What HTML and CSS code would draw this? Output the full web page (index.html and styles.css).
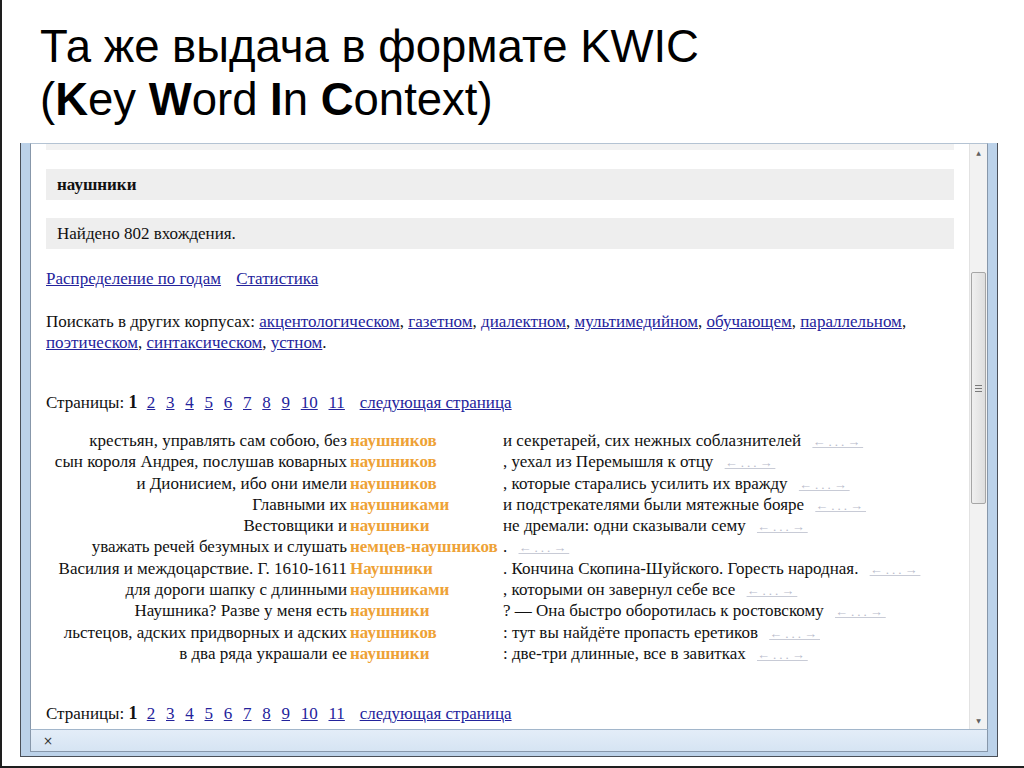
FILE: index.html
```html
<!DOCTYPE html>
<html lang="ru">
<head>
<meta charset="utf-8">
<title>KWIC</title>
<link rel="stylesheet" href="styles.css">
</head>
<body>
<div class="slide">
  <h1 class="title">Та же выдача в формате KWIC<br>(<b>K</b>ey <b>W</b>ord <b>I</b>n <b>C</b>ontext)</h1>
  <div class="window">
    <div class="client">
      <div class="page">
        <div class="topstrip"></div>
        <div class="box query">наушники</div>
        <div class="box found">Найдено 802 вхождения.</div>
        <p class="links"><a href="#">Распределение по годам</a> <a href="#">Статистика</a></p>
        <p class="other">Поискать в других корпусах: <a href="#">акцентологическом</a>, <a href="#">газетном</a>, <a href="#">диалектном</a>, <a href="#">мультимедийном</a>, <a href="#">обучающем</a>, <a href="#">параллельном</a>, <a href="#">поэтическом</a>, <a href="#">синтаксическом</a>, <a href="#">устном</a>.</p>
        <p class="pages pages-top">Страницы: <b>1</b> <a href="#">2</a> <a href="#">3</a> <a href="#">4</a> <a href="#">5</a> <a href="#">6</a> <a href="#">7</a> <a href="#">8</a> <a href="#">9</a> <a href="#">10</a> <a href="#">11</a> <a class="next" href="#">следующая страница</a></p>
        <div class="kwic">
          <div class="left">крестьян, управлять сам собою, без</div><div class="kw">наушников</div><div class="right">и секретарей, сих нежных соблазнителей <a class="ctx" href="#">←...→</a></div>
          <div class="left">сын короля Андрея, послушав коварных</div><div class="kw">наушников</div><div class="right">, уехал из Перемышля к отцу <a class="ctx" href="#">←...→</a></div>
          <div class="left">и Дионисием, ибо они имели</div><div class="kw">наушников</div><div class="right">, которые старались усилить их вражду <a class="ctx" href="#">←...→</a></div>
          <div class="left">Главными их</div><div class="kw">наушниками</div><div class="right">и подстрекателями были мятежные бояре <a class="ctx" href="#">←...→</a></div>
          <div class="left">Вестовщики и</div><div class="kw">наушники</div><div class="right">не дремали: одни сказывали сему <a class="ctx" href="#">←...→</a></div>
          <div class="left">уважать речей безумных и слушать</div><div class="kw">немцев-наушников</div><div class="right">. <a class="ctx" href="#">←...→</a></div>
          <div class="left">Василия и междоцарствие. Г. 1610-1611</div><div class="kw">Наушники</div><div class="right">. Кончина Скопина-Шуйского. Горесть народная. <a class="ctx" href="#">←...→</a></div>
          <div class="left">для дороги шапку с длинными</div><div class="kw">наушниками</div><div class="right">, которыми он завернул себе все <a class="ctx" href="#">←...→</a></div>
          <div class="left">Наушника? Разве у меня есть</div><div class="kw">наушники</div><div class="right">? — Она быстро оборотилась к ростовскому <a class="ctx" href="#">←...→</a></div>
          <div class="left">льстецов, адских придворных и адских</div><div class="kw">наушников</div><div class="right">: тут вы найдёте пропасть еретиков <a class="ctx" href="#">←...→</a></div>
          <div class="left">в два ряда украшали ее</div><div class="kw">наушники</div><div class="right">: две-три длинные, все в завитках <a class="ctx" href="#">←...→</a></div>
        </div>
        <p class="pages pages-bottom">Страницы: <b>1</b> <a href="#">2</a> <a href="#">3</a> <a href="#">4</a> <a href="#">5</a> <a href="#">6</a> <a href="#">7</a> <a href="#">8</a> <a href="#">9</a> <a href="#">10</a> <a href="#">11</a> <a class="next" href="#">следующая страница</a></p>
      </div>
      <div class="scrollbar">
        <div class="sb-arrow sb-up">▲</div>
        <div class="sb-track">
          <div class="sb-before"></div>
          <div class="sb-thumb"><span class="grip"></span></div>
        </div>
        <div class="sb-arrow sb-down">▼</div>
      </div>
    </div>
    <div class="status"><span class="close">×</span></div>
  </div>
</div>
</body>
</html>
```
FILE: styles.css
```css
html, body {
  margin: 0;
  padding: 0;
  background: #ffffff;
}
.slide {
  width: 1024px;
  height: 768px;
  box-sizing: border-box;
  border-left: 2px solid #1e1e1e;
  border-bottom: 2px solid #1e1e1e;
  background: #ffffff;
  overflow: hidden;
}
.title {
  margin: 0;
  padding: 20px 0 0 38px;
  height: 123px;
  box-sizing: border-box;
  font-family: "Liberation Sans", Arial, sans-serif;
  font-weight: normal;
  font-size: 45.5px;
  line-height: 53px;
  color: #000000;
}
.title b {
  font-weight: bold;
}
.window {
  margin: 20px 0 0 18px;
  width: 978px;
  height: 614px;
  box-sizing: border-box;
  border-left: 1px solid #4a4f57;
  border-right: 1px solid #4a4f57;
  border-bottom: 1px solid #4a4f57;
  background: #bcd2e9;
  padding: 0 9px 7px 9px;
  display: flex;
  flex-direction: column;
}
.client {
  flex: 0 0 585px;
  display: flex;
  background: #ffffff;
  border-top: 1px solid #b4c3d3;
  border-left: 1px solid #8797aa;
  border-right: 1px solid #8797aa;
  overflow: hidden;
}
.page {
  flex: 1 1 auto;
  padding: 0 15px 0 15px;
  font-family: "Liberation Serif", "Times New Roman", serif;
  font-size: 17px;
  color: #111111;
  line-height: 21px;
}
.page a {
  color: #24239c;
  text-decoration: underline;
}
.topstrip {
  height: 6px;
  background: #f2f2f2;
}
.box {
  background: #eeeeee;
  height: 31px;
  line-height: 31px;
  padding-left: 11px;
}
.query {
  margin-top: 19px;
  font-weight: bold;
}
.found {
  margin-top: 18px;
}
.page p {
  margin: 0;
}
.links {
  margin-top: 19px !important;
  word-spacing: 11px;
}
.links a {
  word-spacing: 0;
}
.other {
  margin-top: 22px !important;
  max-width: 880px;
}
.pages-top {
  margin-top: 39px !important;
}
.pages b {
  font-size: 18px;
  margin-right: 5px;
}
.pages a {
  margin-right: 6.5px;
}
.pages a.next {
  margin-left: 4px;
}
.kwic {
  margin-top: 17px;
  display: grid;
  grid-template-columns: 304px 153px auto;
  grid-auto-rows: 21.3px;
  line-height: 21.3px;
  white-space: nowrap;
}
.kwic .left {
  text-align: right;
  padding-right: 3px;
}
.kwic .kw {
  color: #eea236;
  font-weight: bold;
}
.page a.ctx {
  color: #b9bccb;
  font-size: 13px;
  letter-spacing: 3px;
  margin-left: 7px;
  text-decoration-color: #c8cbd6;
}
.pages-bottom {
  margin-top: 38.7px !important;
}
.scrollbar {
  flex: 0 0 17px;
  display: flex;
  flex-direction: column;
  background: #f2f2f2;
  border-left: 1px solid #e2e2e2;
}
.sb-arrow {
  height: 17px;
  font-size: 6px;
  line-height: 17px;
  text-align: center;
  color: #606060;
  font-family: "DejaVu Sans", sans-serif;
}
.sb-track {
  flex: 1 1 auto;
  display: flex;
  flex-direction: column;
}
.sb-before {
  height: 111px;
}
.sb-thumb {
  margin: 0 1px;
  height: 232px;
  box-sizing: border-box;
  border: 1px solid #a6a6a6;
  border-radius: 2px;
  background: linear-gradient(to right, #f0f0f0, #dedede);
  display: flex;
  align-items: center;
  justify-content: center;
}
.grip {
  width: 7px;
  height: 5px;
  border-top: 1px solid #7a7a7a;
  border-bottom: 1px solid #7a7a7a;
}
.grip::after {
  content: "";
  display: block;
  margin-top: 2px;
  height: 1px;
  background: #7a7a7a;
}
.status {
  flex: 0 0 21px;
  background: linear-gradient(to bottom, #e3edf8, #d6e4f3);
  border-top: 1px solid #a2b6cb;
  border-left: 1px solid #8797aa;
  border-right: 1px solid #8797aa;
  border-bottom: 1px solid #8797aa;
  display: flex;
  align-items: center;
  padding-left: 12px;
}
.close {
  font-family: "DejaVu Sans", sans-serif;
  font-size: 12px;
  color: #333333;
}
```
